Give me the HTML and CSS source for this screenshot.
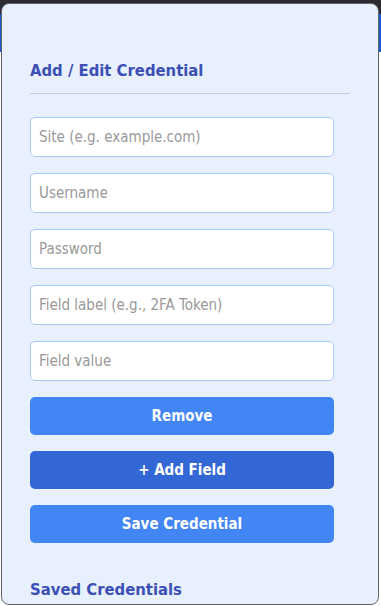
FILE: index.html
```html
<!DOCTYPE html>
<html lang="en">
<head>
<meta charset="UTF-8">
<meta name="viewport" content="width=device-width, initial-scale=1.0">
<title>Credentials</title>
<link rel="stylesheet" href="styles.css">
</head>
<body>

<div class="popup">
  <h2 class="section-title with-line">Add / Edit Credential</h2>
  <div class="form">
    <input type="text" placeholder="Site (e.g. example.com)">
    <input type="text" placeholder="Username">
    <input type="password" placeholder="Password">
    <input type="text" placeholder="Field label (e.g., 2FA Token)">
    <input type="text" placeholder="Field value">
    <button class="btn">Remove</button>
    <button class="btn btn-dark">+ Add Field</button>
    <button class="btn">Save Credential</button>
  </div>
  <h2 class="section-title saved">Saved Credentials</h2>
</div>

</body>
</html>
```

FILE: styles.css
```css
html, body {
  height: 100%;
}

body {
  margin: 0;
  font-family: "DejaVu Sans Condensed", "DejaVu Sans", sans-serif;
  background: linear-gradient(to bottom, #2b2b31 0, #2b2b31 14px, #1a5bd0 14px, #1a5bd0 52px, #ffffff 52px);
}

.popup {
  box-sizing: border-box;
  height: calc(100% - 4px);
  margin: 3px 2px 1px 1px;
  padding: 0 28px;
  background-color: #e8f0fe;
  border: 1px solid #5f6368;
  border-radius: 8px;
  overflow: hidden;
}

.section-title {
  margin: 0;
  font-size: 16.5px;
  font-weight: bold;
  color: #3c4fb4;
  line-height: 20px;
}

.with-line {
  margin-top: 57px;
  padding-bottom: 12px;
  border-bottom: 1px solid #c3cce6;
}

.form {
  display: flex;
  flex-direction: column;
  gap: 16px;
  width: 304px;
  margin-top: 23px;
}

.form input {
  box-sizing: border-box;
  height: 40px;
  padding: 0 8px;
  font-family: inherit;
  font-size: 15px;
  color: #333;
  background-color: #fff;
  border: 1px solid #a8c7fa;
  border-radius: 5px;
  outline: none;
}

.form input::placeholder {
  color: #999;
}

.btn {
  height: 38px;
  padding: 0;
  font-family: inherit;
  font-size: 15px;
  font-weight: bold;
  color: #fff;
  background-color: #4285f4;
  border: none;
  border-radius: 5px;
  cursor: pointer;
}

.btn-dark {
  background-color: #3367d6;
}

.saved {
  margin-top: 37px;
}
```
